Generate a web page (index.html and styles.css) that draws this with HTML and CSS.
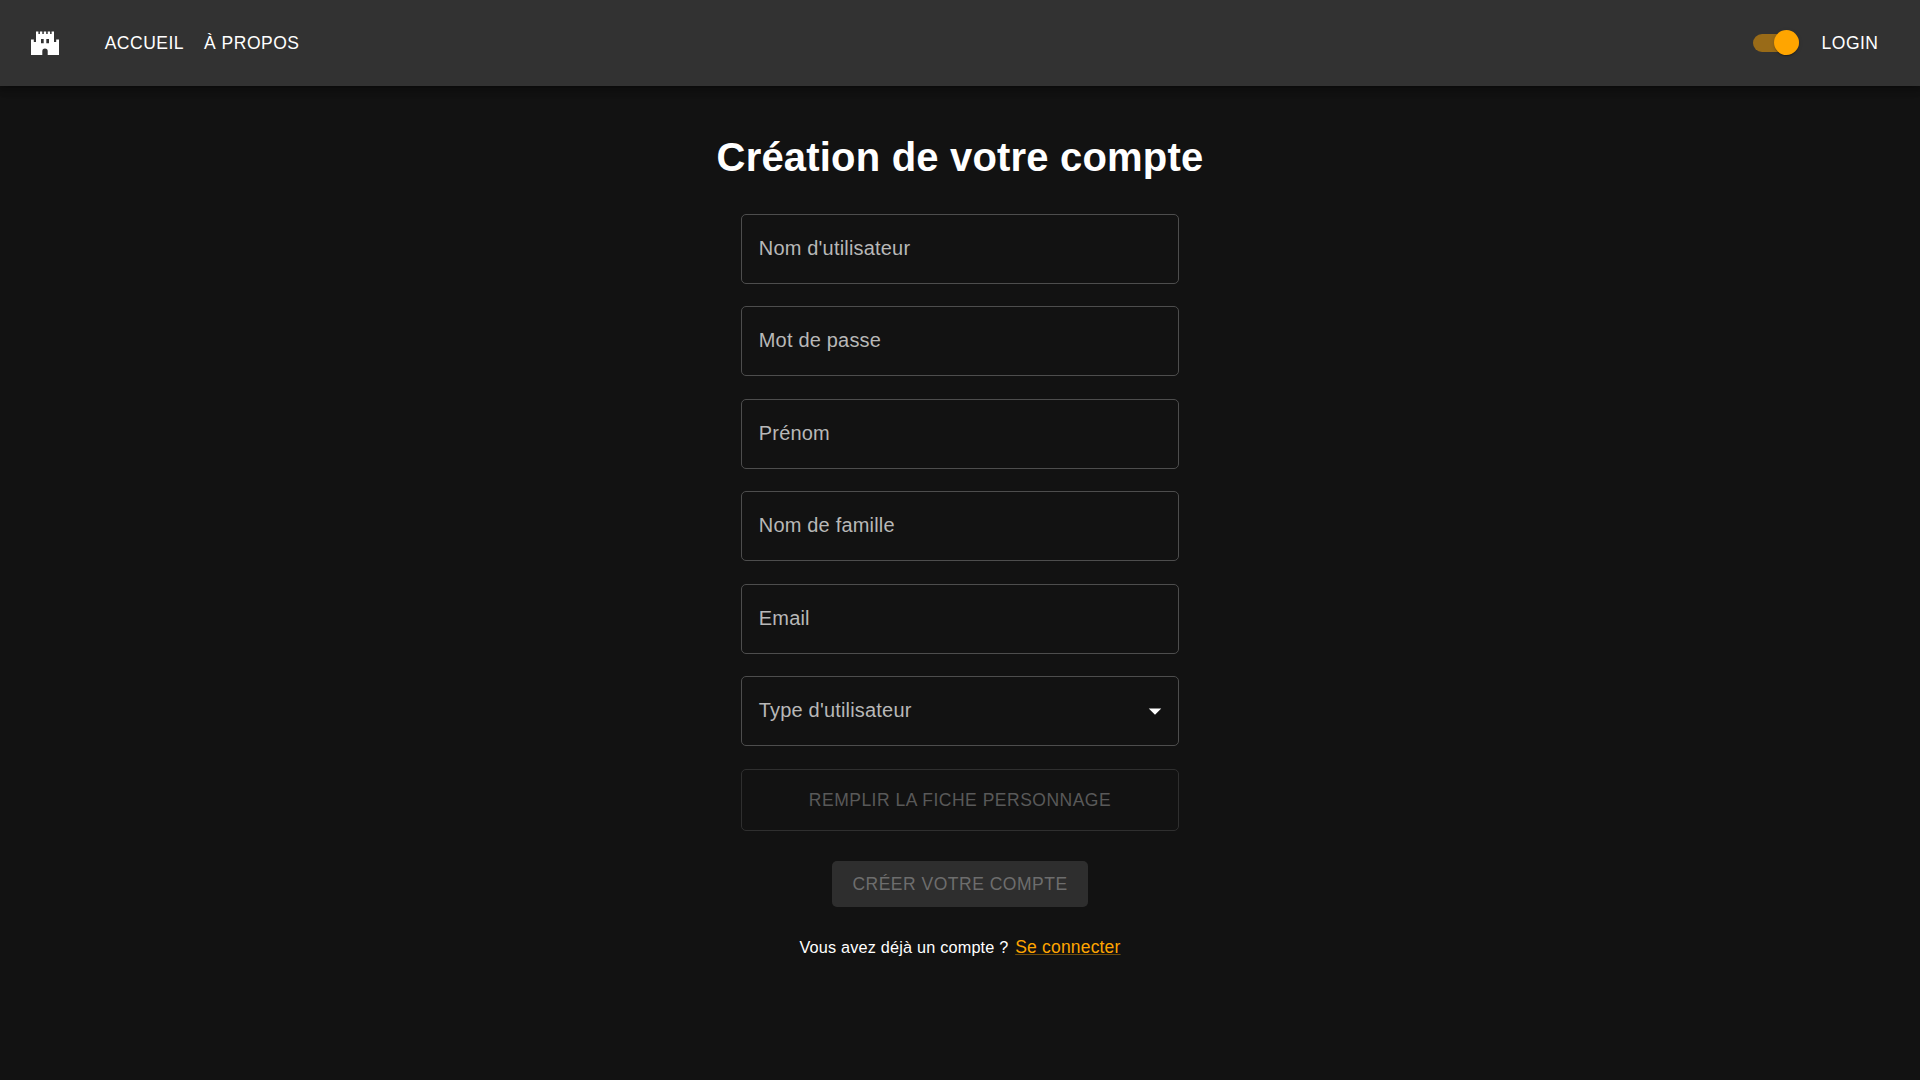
FILE: index.html
```html
<!DOCTYPE html>
<html lang="fr">
<head>
<meta charset="utf-8">
<title>Création de votre compte</title>
<link rel="stylesheet" href="styles.css">
</head>
<body>
<header class="appbar">
  <a class="logo" href="#" aria-label="Accueil">
    <svg width="28" height="24" viewBox="0 0 28 24" fill="#fff"><path fill-rule="evenodd" d="M5 .5h2.400v2.500h1.500v-2.500h2.400v2.500h1.500v-2.500h2.400v2.500h1.500v-2.500h2.400v2.500h1.500v-2.500h2.400v10.500h2.200v-2.500h2.800v15.500h-11.300v-3.700a2.700 2.700 0 0 0-5.400 0v3.700h-11.300v-15.500h2.800v2.500h2.200zM10 8v4.200h2.700v-4.200zM15.300 8v4.200h2.700v-4.200z"/></svg>
  </a>
  <nav class="nav">
    <a href="#">ACCUEIL</a>
    <a href="#">À PROPOS</a>
  </nav>
  <span class="switch"><span class="thumb"></span></span>
  <a class="login" href="#">LOGIN</a>
</header>
<main class="page">
  <h1>Création de votre compte</h1>
  <form class="form">
    <div class="field">Nom d'utilisateur</div>
    <div class="field">Mot de passe</div>
    <div class="field">Prénom</div>
    <div class="field">Nom de famille</div>
    <div class="field">Email</div>
    <div class="field">Type d'utilisateur
      <svg class="arrow" width="30" height="30" viewBox="0 0 24 24" fill="#fff"><path d="M7 10l5 5 5-5z"/></svg>
    </div>
    <button class="outlined" type="button" disabled>REMPLIR LA FICHE PERSONNAGE</button>
  </form>
  <button class="contained" type="button" disabled>CRÉER VOTRE COMPTE</button>
  <p class="signin">Vous avez déjà un compte ? <a href="#">Se connecter</a></p>
</main>
</body>
</html>
```
FILE: styles.css
```css
* { box-sizing: border-box; }
body {
  margin: 0;
  min-height: 100vh;
  background: #121212;
  color: #fff;
  font-family: "Liberation Sans", Arial, sans-serif;
  font-size: 20px;
  letter-spacing: 0.1876px;
}
.appbar {
  display: flex;
  align-items: center;
  height: 86px;
  padding: 0 41.5px 0 31px;
  background: #323232;
  box-shadow: 0 2.5px 5px -1px rgba(0,0,0,.2), 0 5px 6px rgba(0,0,0,.14), 0 1px 12.5px rgba(0,0,0,.12);
}
.logo { display: flex; }
.nav { display: flex; gap: 20px; margin: 0 auto 0 45.7px; }
.nav a, .login {
  color: #fff;
  font-size: 17.5px;
  letter-spacing: 0.5px;
  line-height: 30px;
  text-decoration: none;
}
.switch {
  display: flex;
  align-items: center;
  justify-content: flex-end;
  width: 46px;
  height: 18px;
  margin-right: 22.5px;
  border-radius: 9px;
  background: #996b18;
}
.thumb {
  width: 25px;
  height: 25px;
  margin-bottom: 1px;
  border-radius: 50%;
  background: #ffa500;
  box-shadow: 0 2px 1px -1px rgba(0,0,0,.2), 0 1px 1px rgba(0,0,0,.14), 0 1px 4px rgba(0,0,0,.12);
}
.page { display: flex; flex-direction: column; align-items: center; }
h1 { margin: 48px 0 32.8px; font-size: 40px; line-height: 47px; }
.form { display: flex; flex-direction: column; gap: 22.5px; width: 438px; }
.field {
  display: flex;
  align-items: center;
  justify-content: space-between;
  height: 70px;
  padding: 0 8px 1.2px 16.75px;
  border: 1px solid #4d4d4d;
  border-radius: 5px;
  color: #b8b8b8;
}
.arrow { margin-top: 1.4px; }
button {
  font: 17.5px/30.6px "Liberation Sans", Arial, sans-serif;
  letter-spacing: 0.5px;
  border-radius: 5px;
}
.outlined { height: 62px; border: 1px solid #2f2f2f; background: none; color: #595959; }
.contained { height: 46px; margin-top: 30.2px; padding: 0 20px; border: 0; background: #2e2e2e; color: #6d6d6d; }
.signin { margin: 25px 0 0; font-size: 16.25px; line-height: 30px; }
.signin a {
  margin-left: 2px;
  color: #ffa500;
  font-size: 17.5px;
  text-decoration-color: rgba(255,165,0,.4);
}
```
